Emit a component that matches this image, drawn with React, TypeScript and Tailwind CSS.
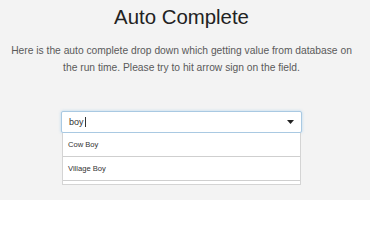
import React from "react";

export default function App() {
  return (
    <div
      className="w-[370px] h-[200px] overflow-hidden bg-[#f3f3f3]"
      style={{ fontFamily: '"Liberation Sans", Arial, sans-serif' }}
    >
      <div className="w-[363px] flex flex-col items-center">
        <h1 className="mt-[5px] text-[20.4px] leading-[24px] text-[#222] font-normal">
          Auto Complete
        </h1>
        <p className="mt-[14px] w-[350px] text-center text-[10.28px] leading-[16.5px] text-[#5a5a5a]">
          Here is the auto complete drop down which getting value from database on the run time. Please try to hit arrow sign on the field.
        </p>
        <div className="mt-[35px] w-[241px] flex flex-col">
          <div className="h-[22px] bg-white border border-[#a9c9e2] rounded-[2px] shadow-[0_0_3px_rgba(102,175,233,0.45)] flex items-center pl-[7px] pr-[7px]">
            <span className="text-[9px] text-[#333] leading-none">boy</span>
            <span className="w-[1px] h-[10px] bg-[#333] ml-[1px]" />
            <div className="flex-1" />
            <svg width="7" height="4" viewBox="0 0 7 4">
              <path d="M0 0 H7 L3.5 4 Z" fill="#222" />
            </svg>
          </div>
          <div className="mx-[1px] bg-white border-l border-r border-b border-[#d4d4d4] pb-[3px]">
            <div className="h-[24px] border-b border-[#cfcfcf] flex items-center pl-[5px] text-[7.6px] text-[#333]">
              Cow Boy
            </div>
            <div className="h-[24px] border-b border-[#cfcfcf] flex items-center pl-[5px] text-[7.6px] text-[#333]">
              Village Boy
            </div>
          </div>
        </div>
      </div>
    </div>
  );
}
